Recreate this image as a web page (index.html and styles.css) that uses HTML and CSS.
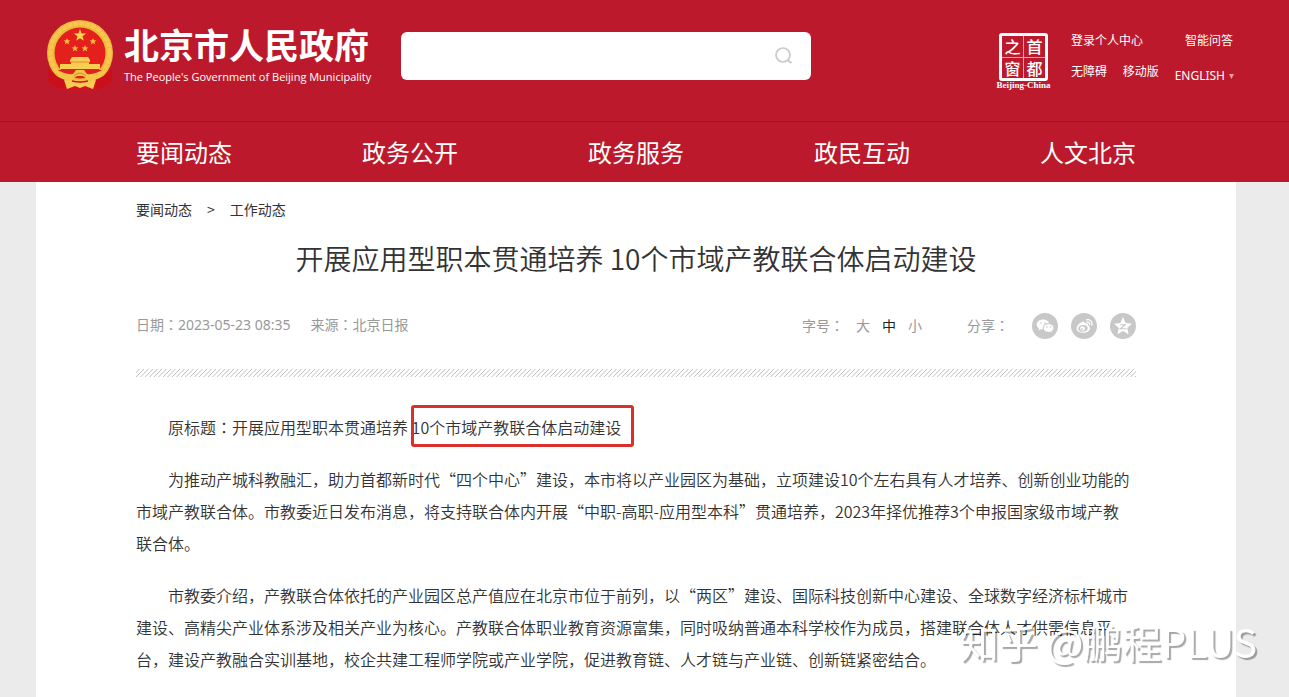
FILE: index.html
```html
<!DOCTYPE html>
<html lang="zh-CN">
<head>
<meta charset="utf-8">
<title>开展应用型职本贯通培养 10个市域产教联合体启动建设</title>
<link rel="stylesheet" href="styles.css">
</head>
<body>
<header class="site-header">
  <div class="wrap topbar">
    <a class="brand" href="#">
      <svg class="emblem" viewBox="0 0 70 74" aria-hidden="true">
        <path d="M6 48L3 62L12 69L27 71H44L58 69L67 62L64 48Z" fill="#d5121c"/>
        <circle cx="35" cy="34" r="33" fill="#f0b93c"/>
        <circle cx="35" cy="34" r="29.500" fill="none" stroke="#f5c850" stroke-width="4" stroke-dasharray="5 1"/>
        <circle cx="35" cy="34" r="25.500" fill="#e3201b"/>
        <path d="M35 10l1.600 4.400 4.600.1-3.700 2.800 1.300 4.500-3.800-2.600-3.800 2.600 1.300-4.500-3.700-2.800 4.600-.1z" fill="#f8d34e"/>
        <g fill="#f4b93d">
          <path d="M22 19l1 2.300 2.400.1-1.900 1.600.7 2.500-2.200-1.400-2.200 1.400.7-2.500-1.900-1.600 2.400-.1z"/>
          <path d="M48 19l1 2.300 2.400.1-1.900 1.600.7 2.500-2.200-1.400-2.200 1.400.7-2.500-1.900-1.600 2.400-.1z"/>
          <path d="M30 26l1 2.300 2.400.1-1.900 1.600.7 2.500-2.200-1.400-2.200 1.400.7-2.500-1.900-1.600 2.400-.1z"/>
          <path d="M40 26l1 2.300 2.400.1-1.900 1.600.7 2.500-2.200-1.400-2.200 1.400.7-2.500-1.900-1.600 2.400-.1z"/>
        </g>
        <path d="M25 41l2-3h16l2 3v2H25zM26 42h18v3h11v5H15v-5h11z" fill="#f9cf51"/>
        <path d="M26 43h18" stroke="#e88928"/>
        <path d="M12 51h46l-8 7H20z" fill="#df241c"/>
        <path d="M11 50q9 6 17 5l3-4h8l3 4q8 1 17-5v4q-7 7-17 6l-4-3h-6l-4 3q-10 1-17-6z" fill="#f6c548"/>
        <path d="M3 50q8 8 17 11l-1 9q-8-1-16-8zM67 50q-8 8-17 11l1 9q8-1 16-8z" fill="#c90f19"/>
        <path d="M19 61q8 3 16 2 8 1 16-2l-3 9-8-3-5 2-5-2-8 3z" fill="#f7cc50"/>
        <path d="M27 62q8 2 16 0" fill="none" stroke="#d5121c" stroke-width="1.500"/>
        <path d="M29 57q6-6 12 0" fill="none" stroke="#dd8c23"/>
      </svg>
      <span class="brand-text">
        <strong class="brand-cn">北京市人民政府</strong>
        <span class="brand-en">The People's Government of Beijing Municipality</span>
      </span>
    </a>
    <form class="search" role="search">
      <input class="search-input" type="text" aria-label="搜索">
      <button class="search-btn" type="button" aria-label="搜索">
        <svg viewBox="0 0 18 18" width="18" height="18"><circle cx="8" cy="8" r="7" fill="none" stroke="#c9c9c9" stroke-width="1.700"/><path d="M13 13.500l3.500 2.500" stroke="#c9c9c9" stroke-width="2"/></svg>
      </button>
    </form>
    <div class="tools">
      <a class="seal" href="#" aria-label="首都之窗">
        <span class="seal-grid"><span>之</span><span>首</span><span>窗</span><span>都</span></span>
        <span class="seal-en">Beijing-China</span>
      </a>
      <div class="links">
        <div class="link-row"><a href="#">登录个人中心</a><a href="#">智能问答</a></div>
        <div class="link-row"><a href="#">无障碍</a><a href="#">移动版</a><a class="english" href="#">ENGLISH <svg viewBox="0 0 5 5" width="5" height="5" aria-hidden="true"><path d="M0 0h5L2.500 5z" fill="#f0a58c"/></svg></a></div>
      </div>
    </div>
  </div>
  <nav class="main-nav">
    <div class="column nav-list">
      <a href="#">要闻动态</a><a href="#">政务公开</a><a href="#">政务服务</a><a href="#">政民互动</a><a href="#">人文北京</a>
    </div>
  </nav>
</header>
<main class="wrap sheet">
  <div class="column">
    <nav class="crumbs" aria-label="位置"><a href="#">要闻动态</a><span>&gt;</span><a href="#">工作动态</a></nav>
    <h1 class="title">开展应用型职本贯通培养 10个市域产教联合体启动建设</h1>
    <div class="meta">
      <div class="source"><span>日期<span class="colon" lang="zh-TW">：</span>2023-05-23 08:35</span><span>来源<span class="colon" lang="zh-TW">：</span>北京日报</span></div>
      <div class="options">
        <div class="sizes"><span>字号<span class="colon" lang="zh-TW">：</span></span><button type="button">大</button><button class="on" type="button">中</button><button type="button">小</button></div>
        <div class="share">
          <span class="share-label">分享<span class="colon" lang="zh-TW">：</span></span>
          <a href="#" aria-label="微信"><svg viewBox="0 0 26 26"><circle cx="13" cy="13" r="13" fill="#c8c8c8"/><path d="M11 6.500c-3.600 0-6.300 2.200-6.300 5 0 1.600.8 2.900 2.200 3.900l-.5 2 2.300-1.200 2.300.4c-1-3.800 2-6.500 6-6.500-.6-2.200-3-3.600-6-3.600z" fill="#fff"/><path d="M16.600 10.800c-3 0-5.200 1.900-5.200 4.200s2.200 4.200 5.200 4.200l1.700-.3 1.900 1-.5-1.700c1.300-.8 2.100-1.900 2.100-3.200 0-2.300-2.300-4.200-5.200-4.200z" fill="#fff" stroke="#c8c8c8" stroke-width=".6"/><g fill="#c8c8c8"><circle cx="9" cy="10" r=".8"/><circle cx="13" cy="10" r=".8"/><circle cx="15" cy="14" r=".7"/><circle cx="18.500" cy="14" r=".7"/></g></svg></a>
          <a href="#" aria-label="微博"><svg viewBox="0 0 26 26"><circle cx="13" cy="13" r="13" fill="#c8c8c8"/><path d="M17 12.500c.8-2-.7-2.700-3.400-1.700.7-2-.6-2.700-2.600-1.900-2.800 1.200-5.400 4-5.400 6.500 0 2.700 3.200 4.400 6.500 4.400 4 0 6.900-2.200 6.900-4.400 0-1.500-.9-2.500-2-2.900z" fill="#fff"/><ellipse cx="12" cy="15.300" rx="4.700" ry="3.300" fill="#c8c8c8" transform="rotate(-8 12 15.300)"/><circle cx="11.500" cy="15.500" r="2.300" fill="#fff"/><circle cx="10.900" cy="15.900" r=".9" fill="#c8c8c8"/><path d="M15.500 6.800c3.700-.8 6.300 2 5.200 5.400M16 9.200c1.800-.4 3 .9 2.500 2.500" fill="none" stroke="#fff" stroke-width="1.300" stroke-linecap="round"/></svg></a>
          <a href="#" aria-label="QQ空间"><svg viewBox="0 0 26 26"><circle cx="13" cy="13" r="13" fill="#c8c8c8"/><path d="M13 4l2.600 6 6.400.7-4.800 4.200 1.400 6.300-5.600-3.200-5.600 3.200 1.400-6.300L4 10.700l6.400-.7z" fill="#fff"/><path d="M10 11.800h5.300l-5 4h6" fill="none" stroke="#c8c8c8" stroke-width="1.100"/></svg></a>
        </div>
      </div>
    </div>
    <svg class="hatch" aria-hidden="true">
      <defs><pattern id="stripes" width="9" height="8" patternUnits="userSpaceOnUse"><path d="M-9 8L-1 0M-4.500 8L3.500 0M0 8L8 0M4.500 8L12.500 0" stroke="#b8b8b8" stroke-width=".9"/></pattern></defs>
      <rect width="100%" height="8" fill="url(#stripes)"/>
    </svg>
    <article class="article">
      <p>原标题<span class="colon" lang="zh-TW">：</span>开展应用型职本贯通培养 <span class="marked">10个市域产教联合体启动建设</span></p>
      <p>为推动产城科教融汇，助力首都新时代“四个中心”建设，本市将以产业园区为基础，立项建设10个左右具有人才培养、创新创业功能的市域产教联合体。市教委近日发布消息，将支持联合体内开展“中职-高职-应用型本科”贯通培养，2023年择优推荐3个申报国家级市域产教联合体。</p>
      <p>市教委介绍，产教联合体依托的产业园区总产值应在北京市位于前列，以“两区”建设、国际科技创新中心建设、全球数字经济标杆城市建设、高精尖产业体系涉及相关产业为核心。产教联合体职业教育资源富集，同时吸纳普通本科学校作为成员，搭建联合体人才供需信息平台，建设产教融合实训基地，校企共建工程师学院或产业学院，促进教育链、人才链与产业链、创新链紧密结合。</p>
    </article>
  </div>
</main>
<div class="watermark">知乎 @鹏程PLUS</div>
</body>
</html>
```

FILE: styles.css
```css
* { box-sizing: border-box; }
body {
  margin: 0;
  padding-right: 17px;
  min-height: 100vh;
  display: flex;
  flex-direction: column;
  background: #ebebeb;
  color: #404040;
  font-family: "Noto Sans CJK SC", "Noto Sans", sans-serif;
  font-size: 16px;
}
a { color: inherit; text-decoration: none; }
button { border: 0; padding: 0; background: none; color: inherit; font: inherit; cursor: pointer; }
svg { display: block; }

.site-header { margin-right: -17px; background: #bc1a2c; color: #fff; }
.wrap { width: 100%; max-width: 1200px; margin: 0 auto; }
.column { width: 100%; max-width: 1000px; margin: 0 auto; }

.topbar { display: flex; align-items: flex-start; max-width: 1217px; padding: 19px 17px 28px 9px; }
.brand { display: flex; gap: 9px; width: 356px; }
.emblem { width: 70px; height: 74px; flex: none; }
.brand-text { display: flex; flex-direction: column; white-space: nowrap; padding-top: 5px; }
.brand-cn { font-size: 35px; line-height: 40px; font-weight: 700; }
.brand-en { font-family: "Open Sans", sans-serif; font-size: 11px; line-height: 26px; }

.search { position: relative; width: 410px; margin-top: 13px; }
.search-input {
  display: block; width: 100%; height: 48px; padding: 0 56px 0 16px;
  border: 0; border-radius: 6px; background: #fff; font: inherit;
}
.search-btn { position: absolute; right: 18px; top: 15px; }

.tools { display: flex; gap: 20px; margin-left: auto; padding-top: 11px; }
.seal { display: flex; flex-direction: column; align-items: center; width: 55px; padding-top: 3px; }
.seal-grid {
  display: grid; grid-template-columns: 1fr 1fr; gap: 1px;
  width: 49px; height: 48px; border: 3px solid #fff; border-radius: 3px;
  background: #e9a5ab; font-size: 16px; line-height: 20px; font-weight: 500; text-align: center;
}
.seal-grid span { background: #bc1a2c; }
.seal-en { font-family: "Liberation Serif", serif; font-weight: 700; font-size: 9px; line-height: 9px; white-space: nowrap; }
.links { display: flex; flex-direction: column; gap: 11px; width: 165px; font-size: 12px; line-height: 20px; }
.link-row { display: flex; justify-content: space-between; padding-right: 3px; }
.link-row + .link-row { padding-right: 2px; }
.english { display: flex; align-items: center; gap: 4px; padding-top: 5px; font-family: "Noto Sans", sans-serif; }

.main-nav { border-top: 1px solid #a01322; padding-right: 17px; }
.nav-list { display: flex; justify-content: space-between; font-size: 24px; line-height: 60px; }

.sheet { flex: 1; background: #fff; }
.crumbs { display: flex; gap: 15px; padding-top: 17px; font-size: 14px; line-height: 20px; color: #333; }
.title { margin: 17px 0 0; font-size: 28px; line-height: 44px; font-weight: 350; text-align: center; color: #333; }
.meta { display: flex; justify-content: space-between; align-items: center; margin-top: 33px; font-size: 14px; line-height: 20px; color: #999; }
.source { display: flex; gap: 20px; font-family: "Noto Sans", "Noto Sans CJK SC", sans-serif; }
.source, .sizes, .share-label { padding-bottom: 3px; }
.colon { font-family: "Noto Sans CJK TC", sans-serif; }
.options, .sizes, .share { display: flex; align-items: center; }
.options { gap: 45px; }
.sizes { gap: 12px; }
.sizes .on { color: #222; }
.share { gap: 13px; }
.share-label { margin-right: 10px; }
.share svg { width: 26px; height: 26px; }
.hatch { width: 100%; height: 8px; margin-top: 30px; }
.article { padding: 34px 4px 0 0; font-weight: 350; color: #333; }
.article p { margin: 0 0 20px; line-height: 32px; text-indent: 32px; }
.marked { position: relative; text-indent: 0; }
.marked::after {
  content: ""; position: absolute; left: -1px; right: -13px; top: -10px; bottom: -8px;
  border: 3px solid #d9302c; border-radius: 3px;
}
.watermark {
  position: fixed; right: 32px; bottom: 30px;
  font-size: 39px; line-height: 52px; color: #fff; white-space: nowrap;
  text-shadow: 2px 2px 1px rgba(0, 0, 0, .35); pointer-events: none;
}
```
